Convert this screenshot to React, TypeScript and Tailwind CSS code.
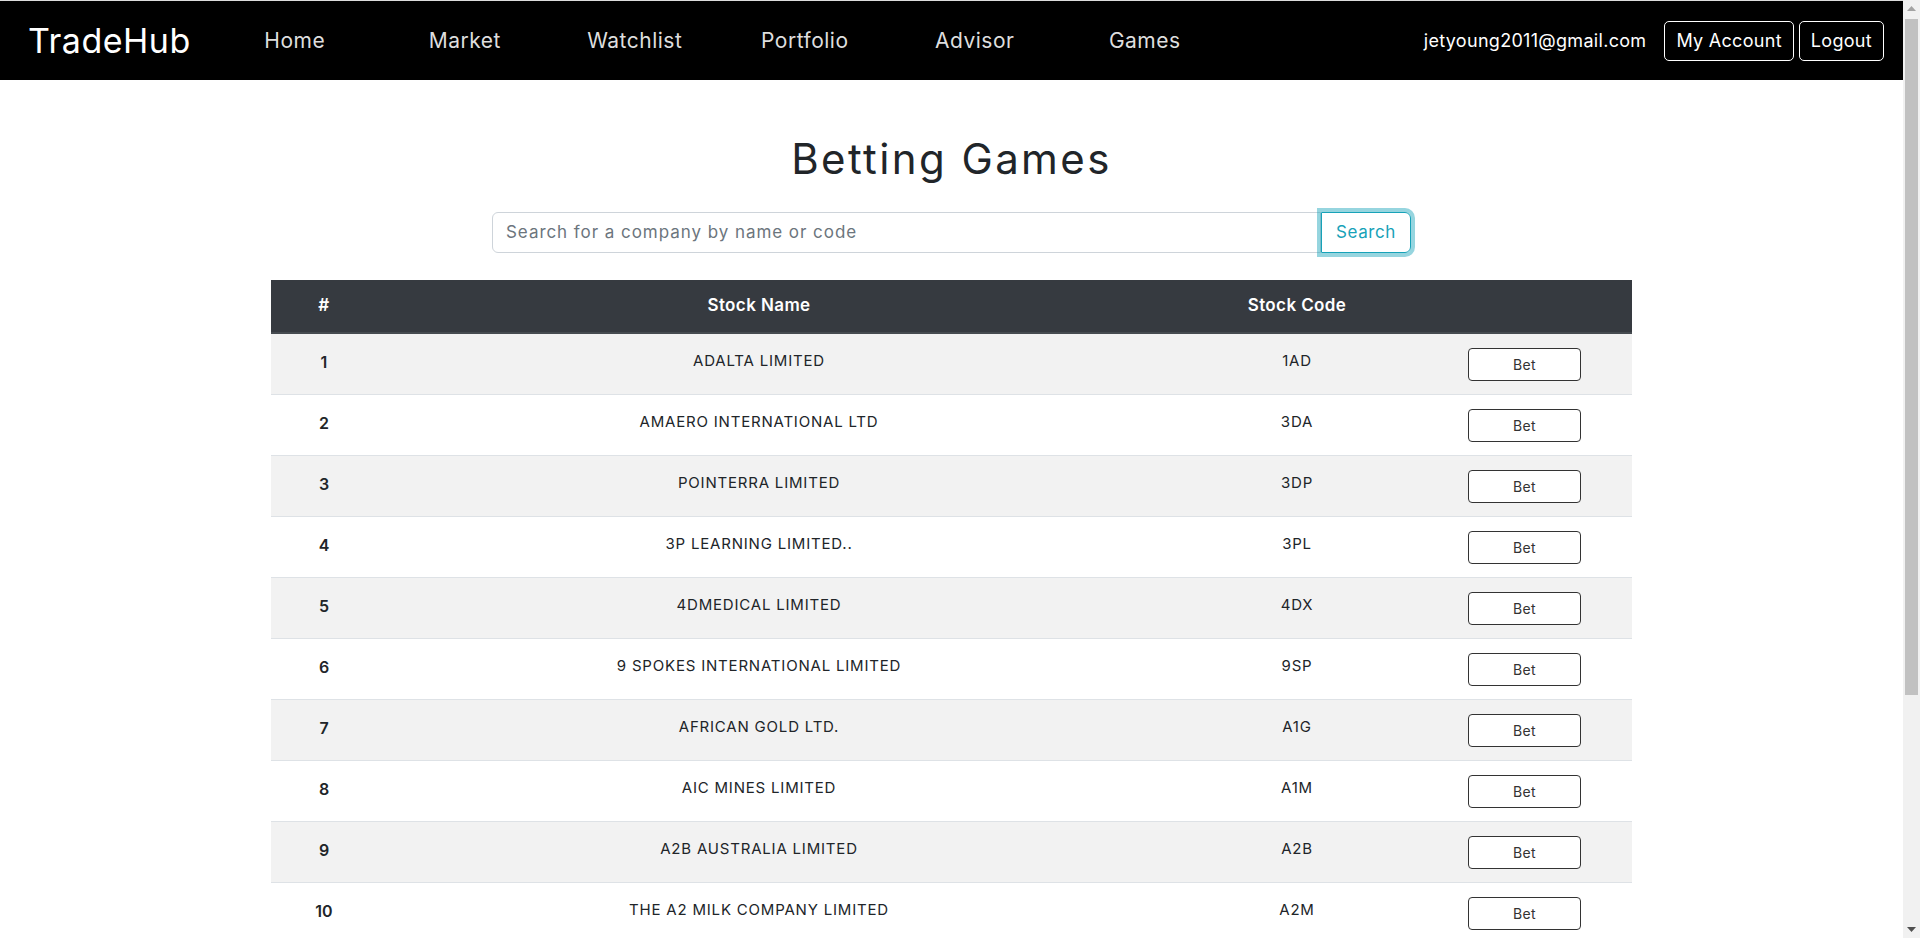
import React from "react";

const stocks = [
  { name: "ADALTA LIMITED", code: "1AD" },
  { name: "AMAERO INTERNATIONAL LTD", code: "3DA" },
  { name: "POINTERRA LIMITED", code: "3DP" },
  { name: "3P LEARNING LIMITED..", code: "3PL" },
  { name: "4DMEDICAL LIMITED", code: "4DX" },
  { name: "9 SPOKES INTERNATIONAL LIMITED", code: "9SP" },
  { name: "AFRICAN GOLD LTD.", code: "A1G" },
  { name: "AIC MINES LIMITED", code: "A1M" },
  { name: "A2B AUSTRALIA LIMITED", code: "A2B" },
  { name: "THE A2 MILK COMPANY LIMITED", code: "A2M" },
];

const links = ["Home", "Market", "Watchlist", "Portfolio", "Advisor", "Games"];

const Navbar = () => {
  return (
    <nav className="h-[80px] border-t border-[#dcdcdc] bg-black flex items-center pl-[28px] pr-[19px]">
      <a href="#" className="text-white text-[34px] leading-none tracking-[0.5px]">TradeHub</a>
      <div className="flex ml-[19px]">
        {links.map((l) => (
          <a key={l} href="#" className="w-[170px] text-center text-[21px] tracking-[0.5px] text-[#dedede]">{l}</a>
        ))}
      </div>
      <div className="ml-auto flex items-center">
        <span className="text-white text-[18px] tracking-[0.3px] mr-[18px]">jetyoung2011@gmail.com</span>
        <button className="h-[40px] px-[11px] border border-white rounded-[5px] text-white text-[18px] tracking-[0.3px]">My Account</button>
        <button className="h-[40px] px-[11px] ml-[5px] border border-white rounded-[5px] text-white text-[18px] tracking-[0.3px]">Logout</button>
      </div>
    </nav>
  );
};

const Scrollbar = () => {
  return (
    <aside className="w-[17px] shrink-0 flex flex-col bg-[#f1f1f1]">
      <div className="h-[17px] flex items-center justify-center">
        <svg width="9" height="5" viewBox="0 0 9 5"><path d="M0 5 L4.5 0 L9 5 Z" fill="#a3a3a3" /></svg>
      </div>
      <div className="flex-1 px-[2px] pt-[2px]">
        <div className="h-[676px] bg-[#c1c1c1]"></div>
      </div>
      <div className="h-[17px] flex items-center justify-center">
        <svg width="9" height="5" viewBox="0 0 9 5"><path d="M0 0 L9 0 L4.5 5 Z" fill="#505050" /></svg>
      </div>
    </aside>
  );
};

const App = () => {
  return (
    <div className="h-[938px] flex overflow-hidden bg-white text-[#212529] font-['Inter',sans-serif]">
      <div className="flex-1 min-w-0 overflow-hidden">
        <Navbar />
        <main>
          <h1 className="mt-[55px] text-center text-[42px] leading-[48px] tracking-[2.4px]">Betting Games</h1>
          <form className="mt-[29px] mx-auto w-[919px] flex h-[41px]" onSubmit={(e) => e.preventDefault()}>
            <input
              type="text"
              placeholder="Search for a company by name or code"
              className="flex-1 border border-[#ced4da] rounded-l-[6px] px-[13px] text-[17px] tracking-[0.95px] outline-none placeholder:text-[#6c757d]"
            />
            <button type="submit" className="w-[90px] border border-[#17a2b8] rounded-r-[6px] text-[#17a2b8] text-[17px] tracking-[0.6px] shadow-[0_0_0_4px_rgba(23,162,184,0.45)]">Search</button>
          </form>
          <div className="mt-[27px] mx-auto w-[1361px]">
            <div className="grid grid-cols-[106px_764px_312px_179px] h-[54px] items-center bg-[#363a40] border-b-2 border-[#464b50] text-white text-[17px] tracking-[0.4px] font-semibold">
              <div className="text-center">#</div>
              <div className="text-center">Stock Name</div>
              <div className="text-center">Stock Code</div>
              <div></div>
            </div>
            {stocks.map((s, i) => (
              <div key={s.code} className={`grid grid-cols-[106px_764px_312px_179px] h-[61px] items-center border-b border-[#dee2e6] ${i % 2 === 0 ? "bg-[#f2f2f2]" : "bg-white"}`}>
                <div className="text-center font-semibold text-[16px] pb-[5px]">{i + 1}</div>
                <div className="text-center text-[15px] tracking-[0.8px] pb-[5px]">{s.name}</div>
                <div className="text-center text-[15px] tracking-[0.8px] pb-[5px]">{s.code}</div>
                <div>
                  <button className="ml-[15px] w-[113px] h-[33px] border border-[#333] rounded-[4px] bg-white text-[14px] tracking-[0.3px] text-[#333]">Bet</button>
                </div>
              </div>
            ))}
          </div>
        </main>
      </div>
      <Scrollbar />
    </div>
  );
};

export default App;
